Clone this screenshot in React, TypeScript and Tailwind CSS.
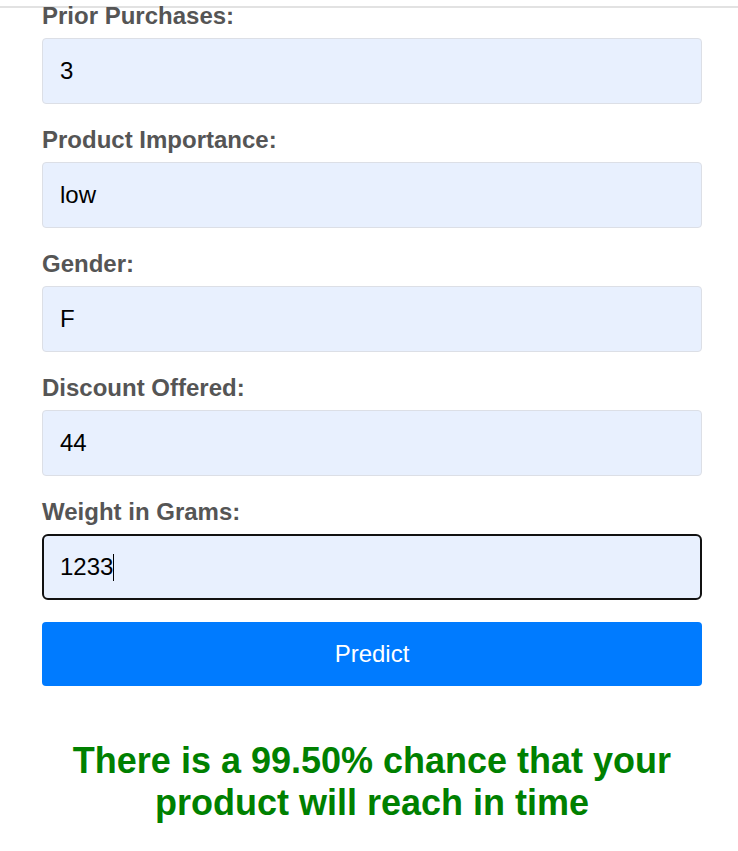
import React from "react";

const FIELDS: { label: string; value: string }[] = [
  { label: "Prior Purchases:", value: "3" },
  { label: "Product Importance:", value: "low" },
  { label: "Gender:", value: "F" },
  { label: "Discount Offered:", value: "44" },
];

export default function App() {
  return (
    <div className="min-h-screen bg-white font-['Liberation_Sans',Arial,sans-serif]">
      <div className="h-[6px]" />
      <div className="h-[2px] bg-[#e2e2e2]" />
      <div className="ml-[42px] w-[660px]">
        {FIELDS.map((f, i) => (
          <div key={f.label} className={i === 0 ? "-mt-[6px]" : "mt-[22px]"}>
            <div className="text-[24px] leading-[28px] font-bold text-[#555] mb-[8px]">
              {f.label}
            </div>
            <div className="h-[66px] rounded-[4px] border border-[#dcdfe6] bg-[#e8f0fe] flex items-center px-[17px] text-[24px] text-black">
              {f.value}
            </div>
          </div>
        ))}
        <div className="mt-[22px]">
          <div className="text-[24px] leading-[28px] font-bold text-[#555] mb-[8px]">
            Weight in Grams:
          </div>
          <div className="h-[66px] rounded-[6px] border-2 border-[#111] bg-[#e8f0fe] flex items-center px-[16px] text-[24px] text-black">
            <span>1233</span>
            <span className="inline-block w-px h-[27px] bg-black" />
          </div>
        </div>
        <button className="mt-[22px] w-full h-[64px] rounded-[4px] bg-[#007bff] text-white text-[24px]">
          Predict
        </button>
        <div className="mt-[54px] text-center text-[36px] leading-[42px] font-bold text-[#008000] px-[20px]">
          There is a 99.50% chance that your product will reach in time
        </div>
      </div>
    </div>
  );
}
